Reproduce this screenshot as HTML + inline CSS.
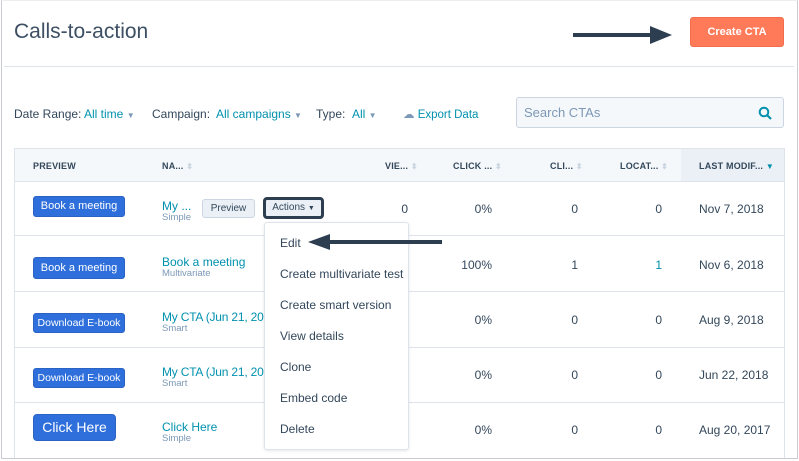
<!DOCTYPE html>
<html><head><style>
*{box-sizing:border-box;margin:0;padding:0}
body{width:799px;height:461px;overflow:hidden;background:#fff;font-family:"Liberation Sans",sans-serif;color:#33475b;position:relative}
.a{position:absolute}
.frame{left:1px;top:0;width:797px;height:459px;border:1px solid #c8ccd2;border-top:1px solid #eee}
.t{font-size:12px;color:#33475b}
.l{color:#0091ae}
.btn{background:#2e6fdb;color:#fff;border-radius:3px;font-size:11.5px;text-align:center;border:1px solid #2a63c4}
.th{font-size:9px;font-weight:bold;color:#33475b;letter-spacing:.2px}
.sort{color:#cbd6e2;font-size:8px}
.hr{height:1px;background:#dfe3eb;left:15px;width:769px}
.num{font-size:12px;text-align:right}
.sub{font-size:9.5px;color:#7c98b6}
.mi{left:280px;font-size:12px;color:#33475b}
</style></head><body>
<div class="a frame"></div>
<div class="a" style="left:14px;top:20px;font-size:21px;color:#3d4f63">Calls-to-action</div>
<svg class="a" style="left:570px;top:24px" width="106" height="22"><line x1="3" y1="11" x2="84" y2="11" stroke="#2d3e50" stroke-width="4"/><polygon points="80,2 102,11 80,20" fill="#2d3e50"/></svg>
<div class="a" style="left:690px;top:17px;width:94px;height:30px;background:#ff7a59;border:1px solid #f36d4c;border-radius:3px;color:#fff;font-size:11px;font-weight:bold;text-align:center;line-height:29px">Create CTA</div>
<div class="a" style="left:4px;top:66px;width:790px;height:1px;background:#dfe3eb"></div>

<div class="a t" style="left:14px;top:107px">Date Range:</div>
<div class="a t l" style="left:84px;top:107px">All time <span style="font-size:8px;color:#7c98b6">▼</span></div>
<div class="a t" style="left:152px;top:107px">Campaign:</div>
<div class="a t l" style="left:216px;top:107px">All campaigns <span style="font-size:8px;color:#7c98b6">▼</span></div>
<div class="a t" style="left:316px;top:107px">Type:</div>
<div class="a t l" style="left:352px;top:107px">All <span style="font-size:8px;color:#7c98b6">▼</span></div>
<div class="a t l" style="left:403px;top:107px;font-size:11.5px"><span style="color:#7c98b6">☁</span> Export Data</div>
<div class="a" style="left:516px;top:97px;width:268px;height:31px;background:#f5f8fa;border:1px solid #cbd6e2;border-radius:3px"></div>
<div class="a" style="left:524px;top:105px;font-size:13px;color:#7c98b6">Search CTAs</div>
<svg class="a" style="left:758px;top:106px" width="14" height="14"><circle cx="6" cy="6" r="4.3" fill="none" stroke="#0091ae" stroke-width="2"/><line x1="9" y1="9" x2="13" y2="13" stroke="#0091ae" stroke-width="2.2"/></svg>

<div class="a" style="left:14px;top:148px;width:771px;height:310px;border:1px solid #dfe3eb;border-bottom:none"></div>
<div class="a" style="left:15px;top:149px;width:769px;height:33px;background:#f5f8fa;border-bottom:1px solid #dfe3eb"></div>
<div class="a" style="left:681px;top:149px;width:103px;height:33px;background:#eaf0f6;border-bottom:1px solid #dfe3eb"></div>
<div class="a th" style="left:33px;top:161px">PREVIEW</div>
<div class="a th" style="left:162px;top:161px">NA... <span class="sort">⬍</span></div>
<div class="a th" style="left:385px;top:161px">VIE... <span class="sort">⬍</span></div>
<div class="a th" style="left:453px;top:161px">CLICK ... <span class="sort">⬍</span></div>
<div class="a th" style="left:550px;top:161px">CLI... <span class="sort">⬍</span></div>
<div class="a th" style="left:620px;top:161px">LOCAT... <span class="sort">⬍</span></div>
<div class="a th" style="left:699px;top:161px">LAST MODIF... <span style="color:#0091ae;font-size:8px">▼</span></div>

<div class="a hr" style="top:235px"></div>
<div class="a hr" style="top:291px"></div>
<div class="a hr" style="top:347px"></div>
<div class="a hr" style="top:402px"></div>

<div class="a btn" style="left:33px;top:196px;width:92px;height:21px;line-height:19px;font-size:11px">Book a meeting</div>
<div class="a l" style="left:162px;top:199px;font-size:12px">My ...</div>
<div class="a sub" style="left:162px;top:212px">Simple</div>
<div class="a" style="left:202px;top:199px;width:53px;height:19px;background:#eaf0f6;border:1px solid #cbd6e2;border-radius:3px;font-size:10px;text-align:center;line-height:17px">Preview</div>
<div class="a" style="left:263px;top:197px;width:61px;height:22px;border:3px solid #2d3e50;border-radius:4px;background:#eaf0f6;font-size:10px;text-align:center;line-height:16px">Actions <span style="font-size:7px">▼</span></div>
<div class="a num" style="left:370px;top:202px;width:38px">0</div>
<div class="a num" style="left:450px;top:202px;width:42px">0%</div>
<div class="a num" style="left:540px;top:202px;width:38px">0</div>
<div class="a num" style="left:622px;top:202px;width:40px">0</div>
<div class="a t" style="left:699px;top:202px">Nov 7, 2018</div>

<div class="a btn" style="left:33px;top:257px;width:92px;height:22px;line-height:20px;font-size:11px">Book a meeting</div>
<div class="a l" style="left:162px;top:255px;font-size:12px">Book a meeting</div>
<div class="a sub" style="left:162px;top:268px">Multivariate</div>
<div class="a num" style="left:450px;top:258px;width:42px">100%</div>
<div class="a num" style="left:540px;top:258px;width:38px">1</div>
<div class="a num l" style="left:622px;top:258px;width:40px">1</div>
<div class="a t" style="left:699px;top:258px">Nov 6, 2018</div>

<div class="a btn" style="left:33px;top:313px;width:92px;height:20px;line-height:18px;font-size:10.5px">Download E-book</div>
<div class="a l" style="left:162px;top:310px;font-size:12px;letter-spacing:-.2px">My CTA (Jun 21, 201</div>
<div class="a sub" style="left:162px;top:323px">Smart</div>
<div class="a num" style="left:450px;top:313px;width:42px">0%</div>
<div class="a num" style="left:540px;top:313px;width:38px">0</div>
<div class="a num" style="left:622px;top:313px;width:40px">0</div>
<div class="a t" style="left:699px;top:313px">Aug 9, 2018</div>

<div class="a btn" style="left:33px;top:368px;width:92px;height:20px;line-height:18px;font-size:10.5px">Download E-book</div>
<div class="a l" style="left:162px;top:365px;font-size:12px;letter-spacing:-.2px">My CTA (Jun 21, 201</div>
<div class="a sub" style="left:162px;top:378px">Smart</div>
<div class="a num" style="left:450px;top:368px;width:42px">0%</div>
<div class="a num" style="left:540px;top:368px;width:38px">0</div>
<div class="a num" style="left:622px;top:368px;width:40px">0</div>
<div class="a t" style="left:699px;top:368px">Jun 22, 2018</div>

<div class="a btn" style="left:33px;top:414px;width:83px;height:27px;line-height:25px;font-size:14px;border-radius:4px">Click Here</div>
<div class="a l" style="left:162px;top:420px;font-size:12px">Click Here</div>
<div class="a sub" style="left:162px;top:433px">Simple</div>
<div class="a num" style="left:450px;top:423px;width:42px">0%</div>
<div class="a num" style="left:540px;top:423px;width:38px">0</div>
<div class="a num" style="left:622px;top:423px;width:40px">0</div>
<div class="a t" style="left:699px;top:423px">Aug 20, 2017</div>

<div class="a" style="left:264px;top:222px;width:145px;height:228px;background:#fff;border:1px solid #dfe3eb;border-radius:3px;box-shadow:0 1px 3px rgba(0,0,0,.1)"></div>
<div class="a mi" style="top:236px">Edit</div>
<div class="a mi" style="top:267px">Create multivariate test</div>
<div class="a mi" style="top:298px">Create smart version</div>
<div class="a mi" style="top:329px">View details</div>
<div class="a mi" style="top:360px">Clone</div>
<div class="a mi" style="top:391px">Embed code</div>
<div class="a mi" style="top:422px">Delete</div>
<svg class="a" style="left:306px;top:232px" width="138" height="20"><line x1="20" y1="10" x2="136" y2="10" stroke="#2d3e50" stroke-width="4"/><polygon points="2,10 24,2 24,18" fill="#2d3e50"/></svg>
</body></html>
